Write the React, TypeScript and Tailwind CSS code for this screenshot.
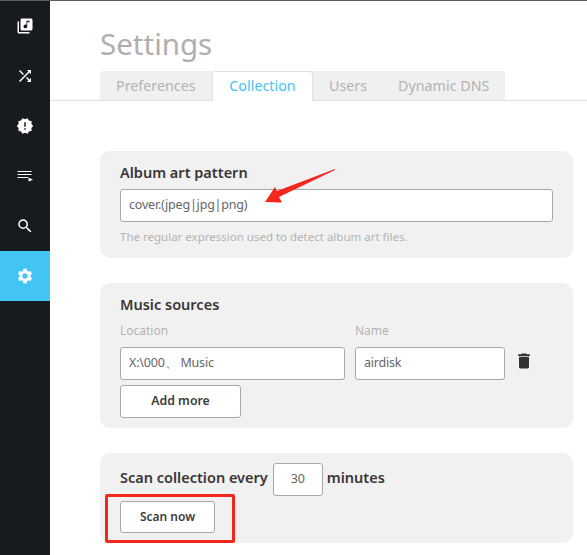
import { MdLibraryMusic, MdShuffle, MdNewReleases, MdSearch, MdSettings, MdDelete } from "react-icons/md";

function QueueIcon({ size }: { size: number }) {
  return (
    <svg width={size} height={size} viewBox="0 0 18 18" fill="none">
      <path d="M1.5 4.5H15.5M1.5 7.5H15.5M1.5 10.5H12" stroke="currentColor" strokeWidth="1" />
      <path d="M12.5 10.5V14.5L17 12.8Z" fill="currentColor" />
    </svg>
  );
}

const navIcons = [MdLibraryMusic, MdShuffle, MdNewReleases, QueueIcon, MdSearch, MdSettings];

const inputClass = "h-[33px] rounded-[3px] border border-[#a8a8a8] bg-white text-[12.5px] tracking-[-0.2px] text-[#666] flex items-center pb-px";
const buttonClass = "rounded-[3px] border border-[#a8a8a8] bg-white font-semibold text-[#3c3c3c] flex items-center justify-center";

export default function App() {
  return (
    <div className="relative flex w-[587px] h-[555px] overflow-hidden bg-white font-['Noto_Sans','Open_Sans',sans-serif]">
      <div className="absolute left-0 top-0 w-full h-px bg-[#5c5c5c]" />
      <nav className="w-[50px] shrink-0 bg-[#171b20] pt-px flex flex-col">
        {navIcons.map((Icon, i) => (
          <div key={i} className={`h-[50px] flex items-center justify-center text-white ${i === 5 ? "bg-[#43c5f4]" : ""}`}>
            <Icon size={18} />
          </div>
        ))}
      </nav>
      <main className="flex-1 min-w-0 pl-[50px] pr-[14px]">
        <h1 className="mt-[23px] h-[41px] text-[29.5px] leading-[41px] text-[#b0aeae]">Settings</h1>
        <div className="mt-[7px] -mr-[14px] -ml-[50px] pl-[50px] flex h-[30px] border-b border-[#e0e0e0] text-[14.3px] text-[#b3b3b3]">
          <div className="w-[112px] h-[29px] pl-[16px] bg-[#f0f0f0] rounded-tl-[3px] leading-[29px]">Preferences</div>
          <div className="w-[101px] h-[30px] -mb-px text-center bg-white border border-b-0 border-[#e0e0e0] rounded-t-[3px] text-[#43c5f4] leading-[28px]">Collection</div>
          <div className="w-[68px] h-[29px] pl-[16px] bg-[#f0f0f0] leading-[29px]">Users</div>
          <div className="w-[124px] h-[29px] pl-[17px] bg-[#f0f0f0] rounded-tr-[3px] leading-[29px]">Dynamic DNS</div>
        </div>

        <section className="mt-[50px] h-[107px] rounded-[10px] bg-[#f1f1f1] pt-[11px] px-[20px]">
          <h2 className="text-[14.5px] leading-[20px] font-semibold text-[#3a3636]">Album art pattern</h2>
          <div className={`mt-[7px] pl-[8px] ${inputClass}`}>cover.(jpeg|jpg|png)</div>
          <p className="mt-[7px] text-[11.5px] leading-[16px] text-[#b5b3b3]">The regular expression used to detect album art files.</p>
        </section>

        <section className="mt-[25px] h-[145px] rounded-[10px] bg-[#f1f1f1] pt-[11px] px-[20px]">
          <h2 className="text-[14.5px] leading-[20px] font-semibold text-[#3a3636]">Music sources</h2>
          <div className="mt-[9px] flex gap-[10px] text-[12px] leading-[16px] text-[#b5b3b3]">
            <span className="w-[225px]">Location</span>
            <span>Name</span>
          </div>
          <div className="mt-[8px] flex gap-[10px]">
            <div className={`w-[225px] pl-[8px] ${inputClass}`}>X:\000、 Music</div>
            <div className={`w-[150px] pl-[8px] ${inputClass}`}>airdisk</div>
            <MdDelete size={20} className="-ml-[1px] mt-[4px] text-[#333]" />
          </div>
          <div className={`mt-[5px] w-[121px] h-[33px] text-[12.3px] ${buttonClass}`}>Add more</div>
        </section>

        <section className="mt-[25px] h-[90px] rounded-[10px] bg-[#f1f1f1] pt-[10px] px-[20px]">
          <div className="flex items-center text-[14.5px] font-semibold text-[#3a3636]">
            <span className="pb-[4px]">Scan collection every</span>
            <div className={`ml-[5px] w-[50px] justify-center font-normal ${inputClass}`}>30</div>
            <span className="ml-[4px] pb-[4px]">minutes</span>
          </div>
          <div className={`mt-[5px] w-[95px] h-[32px] text-[12px] ${buttonClass}`}>Scan now</div>
        </section>
      </main>

      {/* Annotations drawn over the screenshot */}
      <svg className="absolute left-0 top-0 pointer-events-none" width="587" height="555" viewBox="0 0 587 555">
        <polygon points="335,169 277,191 275,187 265,202 282,202.5 279,197 335,170" fill="#f5271d" />
      </svg>
      <div className="absolute left-[105px] top-[494px] w-[130px] h-[49px] rounded-[2px] border-[3px] border-[#f5271d] pointer-events-none" />
    </div>
  );
}
